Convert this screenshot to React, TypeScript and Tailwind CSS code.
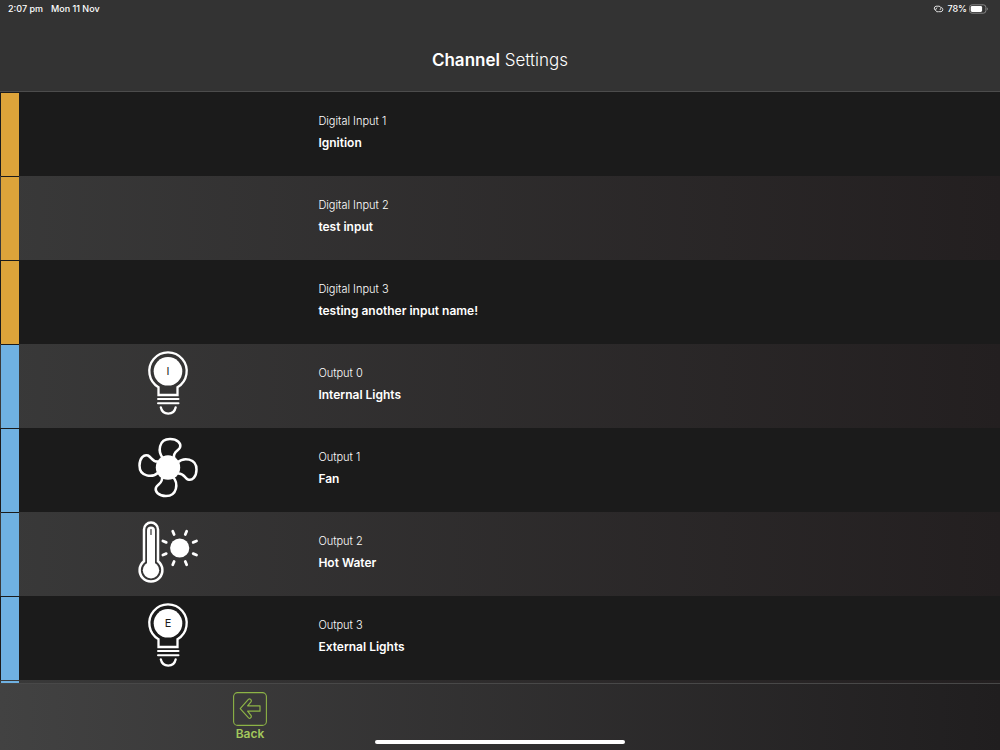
import { clsx } from 'clsx'

type IconName = 'bulb' | 'fan' | 'heat'

type Channel = {
  label: string
  name: string
  kind: 'input' | 'output'
  icon?: IconName
  letter?: string
}

const channels: Channel[] = [
  { label: 'Digital Input 1', name: 'Ignition', kind: 'input' },
  { label: 'Digital Input 2', name: 'test input', kind: 'input' },
  { label: 'Digital Input 3', name: 'testing another input name!', kind: 'input' },
  { label: 'Output 0', name: 'Internal Lights', kind: 'output', icon: 'bulb', letter: 'I' },
  { label: 'Output 1', name: 'Fan', kind: 'output', icon: 'fan' },
  { label: 'Output 2', name: 'Hot Water', kind: 'output', icon: 'heat' },
  { label: 'Output 3', name: 'External Lights', kind: 'output', icon: 'bulb', letter: 'E' },
]

function BulbIcon({ letter }: { letter?: string }) {
  return (
    <svg viewBox="9 -1 80 84" className="h-[84px] w-20" fill="none" stroke="white" strokeWidth="2.3" aria-hidden="true">
      <path d="M38.5 50V42.2A18.7 18.7 0 1 1 57.5 42.2V50Z" />
      <circle cx="48" cy="26.3" r="14.3" fill="white" stroke="none" />
      <path d="M38 54H58.5M38 58.3H58.5" strokeWidth="2" strokeLinecap="round" />
      <path d="M40.8 62.3C42.5 70.8 54 70.8 55.7 62.3" strokeLinecap="round" />
      <text x="48" y="30" textAnchor="middle" fontSize="11" fill="#1b1b1b" stroke="none">
        {letter}
      </text>
    </svg>
  )
}

function FanIcon() {
  return (
    <svg viewBox="9 -1 80 84" className="h-[84px] w-20" fill="none" stroke="white" strokeWidth="2.5" aria-hidden="true">
      {[0, 90, 180, 270].map((angle) => (
        <path
          key={angle}
          d="M43 29C37.5 23 38.5 10 50 10C57.5 10 61.5 14.5 60 18.5C58.2 22.5 53 22.5 54 29"
          transform={`rotate(${angle} 48 38.5)`}
        />
      ))}
      <circle cx="48" cy="38.5" r="12.2" fill="white" stroke="none" />
    </svg>
  )
}

function HeatIcon() {
  return (
    <svg viewBox="9 -1 80 84" className="h-[84px] w-20" fill="none" stroke="white" strokeLinecap="round" aria-hidden="true">
      <path d="M24 48.2V16.5A7 7 0 0 1 38 16.5V48.2A11.4 11.4 0 1 1 24 48.2Z" strokeWidth="2.5" />
      <path d="M31 17.5V52" strokeWidth="8" />
      <circle cx="31" cy="57.2" r="8.2" fill="white" stroke="none" />
      <path d="M31 16.5V21.5" stroke="#333" strokeWidth="1.2" />
      <circle cx="59.7" cy="35" r="9.6" fill="white" stroke="none" />
      {[22.5, 67.5, 112.5, 157.5, 202.5, 247.5, 292.5, 337.5].map((angle) => (
        <path key={angle} d="M59.7 20.4V16.8" strokeWidth="2.8" transform={`rotate(${angle} 59.7 35)`} />
      ))}
    </svg>
  )
}

function ChannelIcon({ channel }: { channel: Channel }) {
  if (channel.icon === 'bulb') return <BulbIcon letter={channel.letter} />
  if (channel.icon === 'fan') return <FanIcon />
  if (channel.icon === 'heat') return <HeatIcon />
  return null
}

function StatusBar() {
  return (
    <div className="flex h-[18px] items-center justify-between px-2 pr-3 text-[9px] font-medium">
      <div className="flex gap-2">
        <span>2:07 pm</span>
        <span>Mon 11 Nov</span>
      </div>
      <div className="flex items-center gap-0.5">
        {/* Hotspot link */}
        <svg viewBox="0 0 11 8" className="mr-px h-2 w-[11px]" fill="none" stroke="#ddd" strokeWidth="1" aria-hidden="true">
          <path d="M7.2 4.7A2 2 0 0 0 6 1.2H3A2.3 2.3 0 0 0 2.2 5.3" strokeLinecap="round" />
          <path d="M3.9 2.9A2 2 0 0 0 5.4 6.7H8A2.3 2.3 0 0 0 8.6 2.4" strokeLinecap="round" />
        </svg>
        <span>78%</span>
        <svg viewBox="0 0 19 10" className="h-2.5 w-[19px]" aria-hidden="true">
          <rect x="0.5" y="0.8" width="16.4" height="8.4" rx="2.6" fill="none" stroke="#858585" />
          <rect x="1.7" y="2" width="11.4" height="6" rx="1.4" fill="white" />
          <path d="M17.9 3.6V6.4C19.2 5.9 19.2 4.1 17.9 3.6Z" fill="#858585" />
        </svg>
      </div>
    </div>
  )
}

export default function App() {
  return (
    <div className="relative flex h-screen flex-col overflow-hidden bg-[#1b1b1b] font-['Inter',sans-serif] text-white">
      <header className="flex h-[92px] shrink-0 flex-col border-b border-[#4c4c4c] bg-[#333333]">
        <StatusBar />
        <h1 className="mt-7 text-center text-[17px] leading-7 font-light">
          <span className="font-semibold">Channel</span> Settings
        </h1>
      </header>

      <main className="min-h-0 flex-1 overflow-hidden">
        <ul>
          {channels.map((channel, index) => (
            <li
              key={channel.label}
              className={clsx(
                'flex h-[84px] px-px',
                index % 2 === 0 ? 'bg-[#1b1b1b]' : 'bg-linear-to-r from-[#393939] to-[#231f20]',
              )}
            >
              <div
                className={clsx(
                  'w-[18px] shrink-0 border-t border-[#1b1b1b]',
                  channel.kind === 'input' ? 'bg-[#dda43a]' : 'bg-[#6fb1e2]',
                )}
              />
              <div className="flex w-[30%] shrink-0 justify-center">
                <ChannelIcon channel={channel} />
              </div>
              <div className="pt-[21px]">
                <p className="text-[11px] leading-4 font-light">{channel.label}</p>
                <p className="mt-1 text-[12px] leading-5 font-semibold">{channel.name}</p>
              </div>
            </li>
          ))}
          {/* Next row, cut off by the footer */}
          <li className="h-[84px] bg-linear-to-r from-[#393939] to-[#231f20] px-px pt-px">
            <div className="h-full w-[18px] bg-[#6fb1e2]" />
          </li>
        </ul>
      </main>

      <footer className="h-[67px] shrink-0 border-t border-[#484848] bg-linear-to-r from-[#424242] to-[#201e1f]">
        <nav className="flex w-1/2 justify-center pt-2">
          <button type="button" className="flex flex-col items-center text-[12px] leading-4 font-semibold text-[#a3c85c]">
            <svg viewBox="0 0 34 34" className="h-[34px] w-[34px]" fill="none" stroke="#8db346" aria-hidden="true">
              <rect x="0.6" y="0.6" width="32.8" height="32.8" rx="4" strokeWidth="1.1" />
              <path
                d="M7.2 16.6L15.6 7.2Q16.6 6.4 17.6 7.4Q18.8 8.4 18 9.8L14.6 13.8H27V19.2H14.6L18 23.4Q18.8 24.8 17.6 25.8Q16.6 26.8 15.6 25.8Z"
                strokeWidth="1.2"
                strokeLinejoin="round"
              />
            </svg>
            Back
          </button>
        </nav>
      </footer>

      {/* Home indicator */}
      <div className="absolute inset-x-0 bottom-1.5 mx-auto h-1 w-1/4 rounded-full bg-white" />
    </div>
  )
}
